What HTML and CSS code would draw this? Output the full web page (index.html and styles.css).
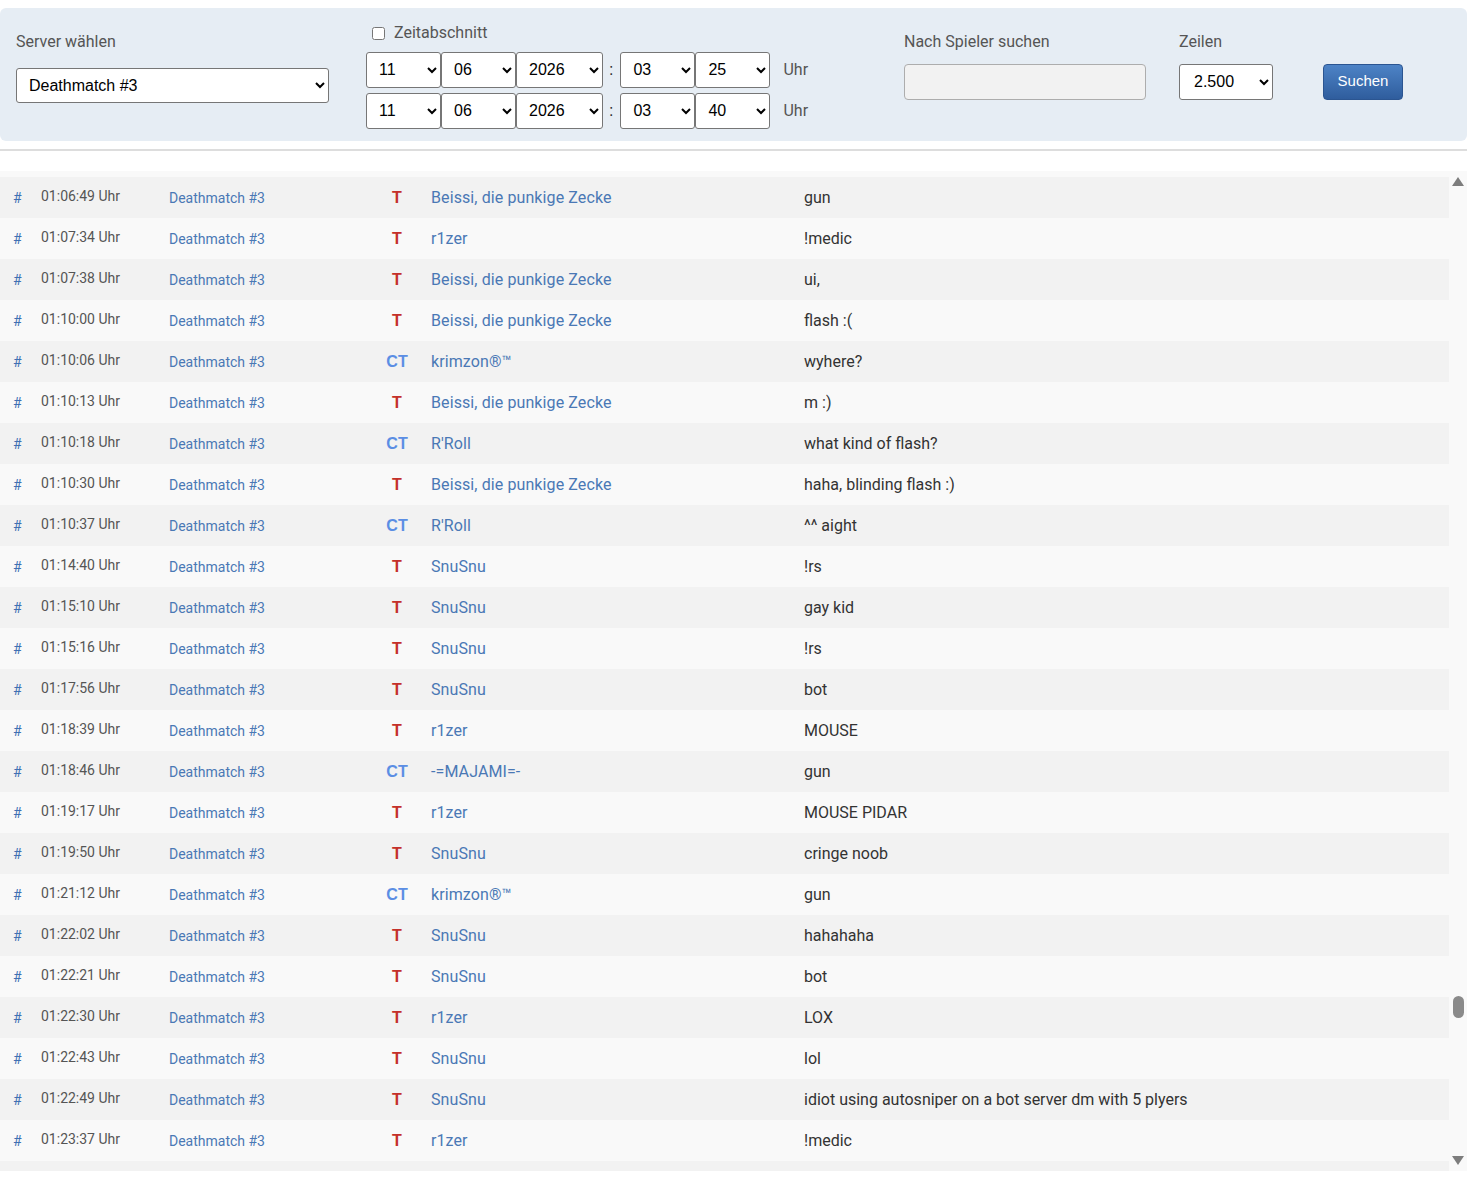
FILE: index.html
```html
<!DOCTYPE html>
<html lang="de">
<head>
    <meta charset="UTF-8">
    <meta name="viewport" content="width=device-width, initial-scale=1.0">
    <title>Chatlog</title>
    <link rel="stylesheet" href="styles.css">
</head>
<body>
    <form class="filter" id="filterForm">
        <div class="field field-server">
            <label for="server">Server wählen</label>
            <select id="server" class="select-server">
                <option>Deathmatch #3</option>
            </select>
        </div>
        <div class="field field-time">
            <div class="check-row">
                <input type="checkbox" id="range">
                <label for="range" class="check-label">Zeitabschnitt</label>
            </div>
            <div class="date-row">
                <select class="sel-day"><option>11</option></select>
                <select class="sel-day"><option>06</option></select>
                <select class="sel-year"><option>2026</option></select>
                <span class="colon">:</span>
                <select class="sel-day"><option>03</option></select>
                <select class="sel-day"><option>25</option></select>
                <span class="uhr">Uhr</span>
            </div>
            <div class="date-row">
                <select class="sel-day"><option>11</option></select>
                <select class="sel-day"><option>06</option></select>
                <select class="sel-year"><option>2026</option></select>
                <span class="colon">:</span>
                <select class="sel-day"><option>03</option></select>
                <select class="sel-day"><option>40</option></select>
                <span class="uhr">Uhr</span>
            </div>
        </div>
        <div class="field field-player">
            <label for="player">Nach Spieler suchen</label>
            <input type="text" id="player" class="player-input">
        </div>
        <div class="field field-rows">
            <label for="rows">Zeilen</label>
            <select id="rows" class="select-rows"><option>2.500</option></select>
        </div>
        <button type="submit" class="btn-search">Suchen</button>
    </form>

    <div class="divider"></div>

    <div class="log-wrap">
        <div class="log" id="log">
            <div class="row"></div>
            <div class="row"><a class="hash">#</a><span class="time">01:06:49 Uhr</span><a class="server">Deathmatch #3</a><span class="team t">T</span><a class="name">Beissi, die punkige Zecke</a><span class="msg">gun</span></div>
            <div class="row"><a class="hash">#</a><span class="time">01:07:34 Uhr</span><a class="server">Deathmatch #3</a><span class="team t">T</span><a class="name">r1zer</a><span class="msg">!medic</span></div>
            <div class="row"><a class="hash">#</a><span class="time">01:07:38 Uhr</span><a class="server">Deathmatch #3</a><span class="team t">T</span><a class="name">Beissi, die punkige Zecke</a><span class="msg">ui,</span></div>
            <div class="row"><a class="hash">#</a><span class="time">01:10:00 Uhr</span><a class="server">Deathmatch #3</a><span class="team t">T</span><a class="name">Beissi, die punkige Zecke</a><span class="msg">flash :(</span></div>
            <div class="row"><a class="hash">#</a><span class="time">01:10:06 Uhr</span><a class="server">Deathmatch #3</a><span class="team ct">CT</span><a class="name">krimzon®™</a><span class="msg">wyhere?</span></div>
            <div class="row"><a class="hash">#</a><span class="time">01:10:13 Uhr</span><a class="server">Deathmatch #3</a><span class="team t">T</span><a class="name">Beissi, die punkige Zecke</a><span class="msg">m :)</span></div>
            <div class="row"><a class="hash">#</a><span class="time">01:10:18 Uhr</span><a class="server">Deathmatch #3</a><span class="team ct">CT</span><a class="name">R'Roll</a><span class="msg">what kind of flash?</span></div>
            <div class="row"><a class="hash">#</a><span class="time">01:10:30 Uhr</span><a class="server">Deathmatch #3</a><span class="team t">T</span><a class="name">Beissi, die punkige Zecke</a><span class="msg">haha, blinding flash :)</span></div>
            <div class="row"><a class="hash">#</a><span class="time">01:10:37 Uhr</span><a class="server">Deathmatch #3</a><span class="team ct">CT</span><a class="name">R'Roll</a><span class="msg">^^ aight</span></div>
            <div class="row"><a class="hash">#</a><span class="time">01:14:40 Uhr</span><a class="server">Deathmatch #3</a><span class="team t">T</span><a class="name">SnuSnu</a><span class="msg">!rs</span></div>
            <div class="row"><a class="hash">#</a><span class="time">01:15:10 Uhr</span><a class="server">Deathmatch #3</a><span class="team t">T</span><a class="name">SnuSnu</a><span class="msg">gay kid</span></div>
            <div class="row"><a class="hash">#</a><span class="time">01:15:16 Uhr</span><a class="server">Deathmatch #3</a><span class="team t">T</span><a class="name">SnuSnu</a><span class="msg">!rs</span></div>
            <div class="row"><a class="hash">#</a><span class="time">01:17:56 Uhr</span><a class="server">Deathmatch #3</a><span class="team t">T</span><a class="name">SnuSnu</a><span class="msg">bot</span></div>
            <div class="row"><a class="hash">#</a><span class="time">01:18:39 Uhr</span><a class="server">Deathmatch #3</a><span class="team t">T</span><a class="name">r1zer</a><span class="msg">MOUSE</span></div>
            <div class="row"><a class="hash">#</a><span class="time">01:18:46 Uhr</span><a class="server">Deathmatch #3</a><span class="team ct">CT</span><a class="name">-=MAJAMI=-</a><span class="msg">gun</span></div>
            <div class="row"><a class="hash">#</a><span class="time">01:19:17 Uhr</span><a class="server">Deathmatch #3</a><span class="team t">T</span><a class="name">r1zer</a><span class="msg">MOUSE PIDAR</span></div>
            <div class="row"><a class="hash">#</a><span class="time">01:19:50 Uhr</span><a class="server">Deathmatch #3</a><span class="team t">T</span><a class="name">SnuSnu</a><span class="msg">cringe noob</span></div>
            <div class="row"><a class="hash">#</a><span class="time">01:21:12 Uhr</span><a class="server">Deathmatch #3</a><span class="team ct">CT</span><a class="name">krimzon®™</a><span class="msg">gun</span></div>
            <div class="row"><a class="hash">#</a><span class="time">01:22:02 Uhr</span><a class="server">Deathmatch #3</a><span class="team t">T</span><a class="name">SnuSnu</a><span class="msg">hahahaha</span></div>
            <div class="row"><a class="hash">#</a><span class="time">01:22:21 Uhr</span><a class="server">Deathmatch #3</a><span class="team t">T</span><a class="name">SnuSnu</a><span class="msg">bot</span></div>
            <div class="row"><a class="hash">#</a><span class="time">01:22:30 Uhr</span><a class="server">Deathmatch #3</a><span class="team t">T</span><a class="name">r1zer</a><span class="msg">LOX</span></div>
            <div class="row"><a class="hash">#</a><span class="time">01:22:43 Uhr</span><a class="server">Deathmatch #3</a><span class="team t">T</span><a class="name">SnuSnu</a><span class="msg">lol</span></div>
            <div class="row"><a class="hash">#</a><span class="time">01:22:49 Uhr</span><a class="server">Deathmatch #3</a><span class="team t">T</span><a class="name">SnuSnu</a><span class="msg">idiot using autosniper on a bot server dm with 5 plyers</span></div>
            <div class="row"><a class="hash">#</a><span class="time">01:23:37 Uhr</span><a class="server">Deathmatch #3</a><span class="team t">T</span><a class="name">r1zer</a><span class="msg">!medic</span></div>
            <div class="row"></div>
        </div>
        <div class="scrollbar">
            <span class="arrow-up"></span>
            <div class="track"><span class="thumb"></span></div>
            <span class="arrow-down"></span>
        </div>
    </div>

    <script src="app.js"></script>
</body>
</html>
```

FILE: styles.css
```css
/* Chatlog */
body {
    margin: 0;
    font-family: Roboto, 'Liberation Sans', sans-serif;
    color: #333;
    background: #fff;
}
.filter {
    display: flex;
    align-items: flex-start;
    margin: 8px 5px 0 0;
    padding: 14px 0 12px 16px;
    background: #e6edf4;
    border-radius: 6px;
}
.field label {
    display: block;
    font-size: 16px;
    line-height: 20px;
    color: #555;
}
.field-server {
    width: 313px;
    margin: 10px 37px 0 0;
}
.field-server label {
    margin-bottom: 16px;
}
select {
    font-family: 'Liberation Sans', Arial, sans-serif;
    font-size: 16px;
    color: #000;
    background: #fff;
    border: 1px solid #767676;
    border-radius: 3px;
    padding: 0 4px 0 8px;
    margin: 0;
}
.select-server {
    width: 313px;
    height: 35px;
}
.field-time {
    width: 538px;
}
.check-row {
    display: flex;
    align-items: center;
    height: 20px;
    margin: 1px 0 9px;
}
.check-row input {
    margin: 0 9px 0 6px;
    width: 13px;
    height: 13px;
}
.field .check-label {
    display: inline;
}
.date-row {
    display: flex;
    align-items: center;
}
.date-row + .date-row {
    margin-top: 5px;
}
.date-row select {
    height: 36px;
    padding-bottom: 2px;
}
.sel-day {
    width: 75px;
}
.sel-year {
    width: 87px;
}
.colon {
    font-family: 'Liberation Sans', Arial, sans-serif;
    font-size: 16px;
    margin: 0 7px 0 6px;
    color: #333;
}
.uhr {
    font-size: 16px;
    color: #555;
    margin-left: 13px;
    padding-bottom: 2px;
}
.field-player {
    width: 242px;
    margin: 10px 33px 0 0;
}
.field-player label, .field-rows label {
    margin-bottom: 12px;
}
.player-input {
    box-sizing: border-box;
    width: 242px;
    height: 36px;
    margin: 0;
    background: #f2f2f2;
    border: 1px solid #adadad;
    border-radius: 4px;
}
.field-rows {
    width: 94px;
    margin: 10px 50px 0 0;
}
.select-rows {
    width: 94px;
    height: 36px;
    padding-left: 10px;
    padding-bottom: 2px;
}
.btn-search {
    margin-top: 42px;
    width: 80px;
    height: 36px;
    padding: 0 0 3px;
    background: linear-gradient(#4d83c6, #2f5d9d);
    border: 1px solid #2b5591;
    border-radius: 4px;
    color: #fff;
    font-family: 'Liberation Sans', Arial, sans-serif;
    font-size: 15px;
    cursor: pointer;
}
.divider {
    height: 2px;
    background: #ddd;
    margin: 8px 5px 0 0;
}
.log-wrap {
    display: flex;
    height: 1000px;
    margin: 20px 5px 0 0;
}
.log {
    flex: 1;
    overflow: hidden;
}
.scrollbar {
    width: 18px;
    display: flex;
    flex-direction: column;
    align-items: center;
    background: #f9f9f9;
}
.arrow-up, .arrow-down {
    width: 0;
    height: 0;
    border-left: 6px solid transparent;
    border-right: 6px solid transparent;
}
.arrow-up {
    margin-top: 6px;
    border-bottom: 9px solid #7d7d7d;
}
.arrow-down {
    margin-bottom: 6px;
    border-top: 9px solid #7d7d7d;
}
.track {
    flex: 1;
    width: 100%;
    display: flex;
    justify-content: center;
    padding-top: 810px;
}
.thumb {
    width: 11px;
    height: 22px;
    border-radius: 6px;
    background: #8a8a8a;
}
.row {
    display: grid;
    grid-template-columns: 28px 128px 208px 40px 387px 1fr;
    align-items: center;
    height: 41px;
    padding-left: 13px;
    background: #f9f9f9;
}
.row:nth-child(even) {
    background: #f2f2f2;
}
.row a {
    text-decoration: none;
    cursor: pointer;
}
.hash {
    font-size: 14px;
    color: #3f70b3;
}
.time {
    font-size: 14px;
    color: #555;
    padding-bottom: 4px;
}
.server {
    font-size: 14px;
    color: #4a78b5;
}
.team {
    font-family: 'Liberation Sans', Arial, sans-serif;
    font-weight: bold;
    font-size: 16px;
    text-align: center;
}
.team.t {
    color: #c4302a;
}
.team.ct {
    color: #5b8ee4;
}
.name {
    font-size: 16px;
    color: #4a78b5;
    padding-left: 14px;
    letter-spacing: 0.1px;
}
.msg {
    font-size: 16px;
    color: #333;
}
```

FILE: app.js
```js
const log = document.getElementById('log');
log.scrollTop = 35;

document.getElementById('filterForm').addEventListener('submit', (e) => {
    e.preventDefault();
});
```
